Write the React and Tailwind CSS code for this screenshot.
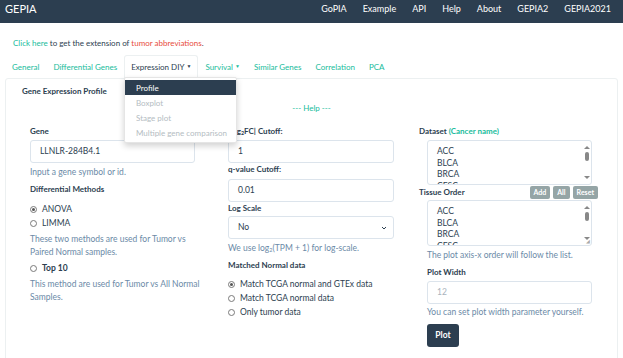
import React from 'react';

const navItems = ['GoPIA', 'Example', 'API', 'Help', 'About', 'GEPIA2', 'GEPIA2021'];
const tabs = ['General', 'Differential Genes', 'Expression DIY', 'Survival', 'Similar Genes', 'Correlation', 'PCA'];
const menu = ['Profile', 'Boxplot', 'Stage plot', 'Multiple gene comparison'];

const Radio = ({ checked, label, bold }) => (
    <div className="flex items-center gap-[5px] h-[14px]">
        <span className="w-[7px] h-[7px] rounded-full border border-[#7a7a7a] bg-white flex items-center justify-center">
            {checked && <span className="w-[3px] h-[3px] rounded-full bg-[#555]"></span>}
        </span>
        <span className={`text-[8.5px] text-[#2c3e50] ${bold ? 'font-bold' : ''}`}>{label}</span>
    </div>
);

const ListBox = ({ h, grip }) => (
    <div className={`relative border border-[#dce4ec] rounded-[3px] bg-white flex ${h}`}>
        <div className="flex-1 pl-[9px] pt-[5px] text-[8.5px] leading-[11.5px] text-[#2c3e50] overflow-hidden">
            <div>ACC</div>
            <div>BLCA</div>
            <div>BRCA</div>
            <div>CESC</div>
        </div>
        <div className="w-[9px] flex flex-col items-center pt-[5px] gap-[3px]">
            <span className="w-0 h-0 border-l-[3px] border-r-[3px] border-b-[3px] border-l-transparent border-r-transparent border-b-[#888]"></span>
            <span className="w-[4px] h-[9px] rounded-[2px] bg-[#888]"></span>
            <span className="flex-1"></span>
            <span className="w-0 h-0 border-l-[3px] border-r-[3px] border-t-[3px] border-l-transparent border-r-transparent border-t-[#888] mb-[5px]"></span>
        </div>
        {grip && <span className="absolute right-[1px] bottom-[1px] text-[5px] leading-none text-[#aaa]">◢</span>}
    </div>
);

const Input = ({ value, muted }) => (
    <div className={`h-[23px] border border-[#dce4ec] rounded-[3px] bg-white flex items-center pl-[9px] text-[8.5px] ${muted ? 'text-[#aab4bd]' : 'text-[#2c3e50]'}`}>
        {value}
    </div>
);

const Help = ({ children, className = '' }) => (
    <p className={`text-[8.5px] leading-[13px] text-[#6b8aa7] ${className}`}>{children}</p>
);

const Label = ({ children, className = '' }) => (
    <div className={`text-[8px] leading-[12px] font-bold text-[#2c3e50] ${className}`}>{children}</div>
);

export default function App() {
    return (
        <div className="w-[623px] h-[358px] overflow-hidden bg-white font-['Lato',sans-serif] text-[#2c3e50]">
            <nav className="h-[23px] bg-[#2c3e50] flex items-start justify-between pl-[5px] pr-[12px] pt-[2px] text-white">
                <span className="text-[11px] leading-[14px]">GEPIA</span>
                <div className="flex gap-[16px] text-[9px] leading-[14px]">
                    {navItems.map((n) => <span key={n}>{n}</span>)}
                </div>
            </nav>

            <div className="pl-[13px] pt-[14px] text-[8px] leading-[12px]">
                <span className="text-[#18bc9c]">Click here</span> to get the extension of{' '}
                <span className="text-[#e74c3c]">tumor abbreviations</span>.
            </div>

            <div className="relative mt-[6px] px-[5px]">
                <div className="flex items-end h-[23px] text-[8px]">
                    {tabs.map((t, i) => (
                        <div
                            key={t}
                            className={`h-[23px] flex items-center px-[6px] ${i === 2 ? 'border border-b-0 border-[#ecf0f1] rounded-t-[3px] text-[#2c3e50] bg-white' : 'text-[#18bc9c] border border-transparent'}`}
                        >
                            {t}
                            {(i === 2 || i === 3) && <span className="ml-[2px] text-[5px]">▼</span>}
                        </div>
                    ))}
                </div>

                <div className="border border-[#ecf0f1] rounded-[3px] h-[290px] pl-[16px] pr-[16px] pt-[6px]">
                    <div className="text-[8px] leading-[12px] font-bold">Gene Expression Profile</div>
                    <div className="text-center text-[8px] leading-[12px] text-[#18bc9c] mt-[5px]">--- Help ---</div>

                    <div className="grid grid-cols-[165px_166px_165px] gap-x-[33px] pl-[8px] mt-[11px]">
                        <div className="flex flex-col">
                            <Label className="mb-[3px]">Gene</Label>
                            <Input value="LLNLR-284B4.1" />
                            <Help className="mt-[3px]">Input a gene symbol or id.</Help>
                            <Label className="mt-[4px] mb-[7px]">Differential Methods</Label>
                            <Radio checked label="ANOVA" />
                            <Radio label="LIMMA" />
                            <Help className="mt-[3px]">These two methods are used for Tumor vs Paired Normal samples.</Help>
                            <div className="mt-[2px]"><Radio label="Top 10" bold /></div>
                            <Help className="mt-[3px] whitespace-nowrap">This method are used for Tumor vs All Normal<br />Samples.</Help>
                        </div>

                        <div className="flex flex-col">
                            <Label className="mb-[3px]">|log<sub className="text-[5.5px]">2</sub>FC| Cutoff:</Label>
                            <Input value="1" />
                            <Label className="mb-[4px]">q-value Cutoff:</Label>
                            <Input value="0.01" />
                            <Label className="mb-[2px]">Log Scale</Label>
                            <div className="h-[23px] border border-[#dce4ec] rounded-[3px] flex items-center justify-between pl-[9px] pr-[6px] text-[8.5px]">
                                <span>No</span>
                                <svg width="6" height="4" viewBox="0 0 6 4"><path d="M1 1l2 2 2-2" fill="none" stroke="#2c3e50" strokeWidth="1" /></svg>
                            </div>
                            <Help className="mt-[3px]">We use log<sub className="text-[5.5px]">2</sub>(TPM + 1) for log-scale.</Help>
                            <Label className="mt-[4px] mb-[6px]">Matched Normal data</Label>
                            <Radio checked label="Match TCGA normal and GTEx data" />
                            <Radio label="Match TCGA normal data" />
                            <Radio label="Only tumor data" />
                        </div>

                        <div className="flex flex-col">
                            <Label className="mb-[3px] -ml-[8px]">Dataset <span className="text-[#18bc9c]">(Cancer name)</span></Label>
                            <ListBox h="h-[45px]" />
                            <div className="flex items-center justify-between -ml-[8px] h-[14px]">
                                <Label>Tissue Order</Label>
                                <div className="flex gap-[3px] mr-[-6px]">
                                    {['Add', 'All', 'Reset'].map((b) => (
                                        <span key={b} className="h-[13px] px-[4px] flex items-center rounded-[2px] bg-[#95a5a6] text-white text-[7px] font-bold">{b}</span>
                                    ))}
                                </div>
                            </div>
                            <div className="mt-[1px]"><ListBox h="h-[46px]" grip /></div>
                            <Help className="mt-[3px]">The plot axis-x order will follow the list.</Help>
                            <Label className="mt-[4px] mb-[3px]">Plot Width</Label>
                            <Input value="12" muted />
                            <Help className="mt-[2px]">You can set plot width parameter yourself.</Help>
                            <button className="mt-[5px] w-[32px] h-[23px] rounded-[3px] bg-[#2c3e50] text-white text-[8.5px] font-bold">Plot</button>
                        </div>
                    </div>
                </div>

                <div className="absolute left-[124px] top-[22px] w-[113px] bg-white border border-[#e5e5e5] rounded-[2px] shadow-[0_3px_6px_rgba(0,0,0,0.18)] py-[2px] text-[8px]">
                    {menu.map((m, i) => (
                        <div key={m} className={`h-[15px] flex items-center pl-[11px] whitespace-nowrap ${i === 0 ? 'bg-[#2c3e50] text-white' : 'text-[#b4bcc2]'}`}>{m}</div>
                    ))}
                </div>
            </div>
        </div>
    );
}
